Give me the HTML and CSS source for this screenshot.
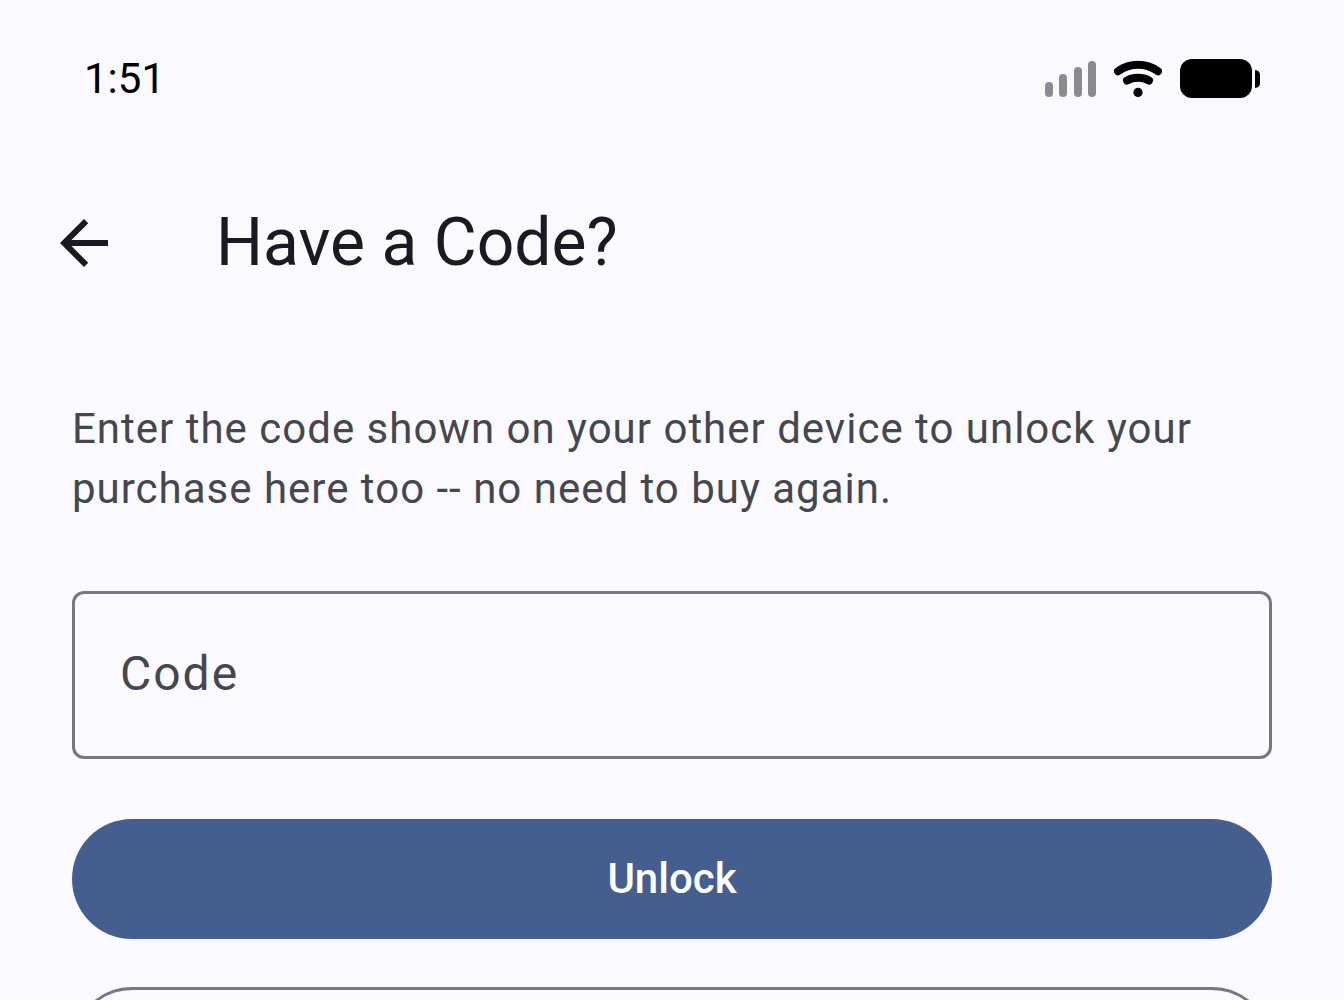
FILE: index.html
```html
<!DOCTYPE html>
<html lang="en">
<head>
<meta charset="utf-8">
<meta name="viewport" content="width=device-width, initial-scale=1">
<title>Have a Code?</title>
<link rel="stylesheet" href="styles.css">
</head>
<body>
<div class="status-bar">
  <time class="clock">1:51</time>
  <div class="indicators">
    <svg class="signal" viewBox="0 0 52 40" aria-hidden="true">
      <rect x="1" y="23" width="8" height="15" rx="4"/>
      <rect x="15" y="15" width="8" height="23" rx="4"/>
      <rect x="30" y="8" width="8" height="30" rx="4"/>
      <rect x="44" y="2" width="8" height="36" rx="4"/>
    </svg>
    <svg class="wifi" viewBox="0 0 48 40" aria-hidden="true">
      <path d="M4 12.200Q13 5.800 24 5.800T44 12.200"/>
      <path d="M13 21.600Q18 18.800 24 18.800T35 21.600"/>
      <circle cx="24" cy="33.400" r="4.600"/>
    </svg>
    <svg class="battery" viewBox="0 0 80 40" aria-hidden="true">
      <rect x="0" y="0" width="72" height="39" rx="12"/>
      <path d="M75 11Q80 11.500 80 16V24Q80 28.500 75 29Z"/>
    </svg>
  </div>
</div>
<header class="app-bar">
  <button class="back" type="button">
    <svg viewBox="0 0 24 24" aria-hidden="true"><path d="M20 11H7.830l5.590-5.590L12 4l-8 8 8 8 1.410-1.410L7.830 13H20z"/></svg>
  </button>
  <h1 class="title">Have a Code?</h1>
</header>
<main class="content">
  <form class="code-form">
    <p class="intro" id="intro">Enter the code shown on your other device to unlock your purchase here too -- no need to buy again.</p>
    <label class="field">
      <input class="code-input" type="text" placeholder="Code" aria-describedby="intro">
    </label>
    <div class="actions">
      <button class="button filled" type="submit">Unlock</button>
      <button class="button outlined" type="button"></button>
    </div>
  </form>
</main>
</body>
</html>
```
FILE: styles.css
```css
* {
  box-sizing: border-box;
}

body {
  display: flex;
  flex-direction: column;
  height: 100vh;
  margin: 0;
  overflow: hidden;
  background: #faf9ff;
  color: #1a1b20;
  font-family: Roboto, "Liberation Sans", sans-serif;
}

.status-bar {
  display: flex;
  flex: none;
  align-items: center;
  justify-content: space-between;
  padding: 49px 84px 38px;
  color: #000;
}

.clock {
  font-size: 42px;
  line-height: 60px;
}

.indicators {
  display: flex;
  gap: 18px;
}

.indicators svg {
  display: block;
  height: 40px;
  fill: #000;
}

.indicators .signal {
  width: 52px;
  fill: #8b8a8f;
}

.wifi {
  width: 48px;
}

.wifi path {
  fill: none;
  stroke: #000;
  stroke-linecap: round;
  stroke-width: 8;
}

.battery {
  width: 80px;
}

.app-bar {
  display: flex;
  flex: none;
  align-items: center;
  gap: 72px;
  min-height: 192px;
  padding: 0 24px;
}

.back {
  padding: 24px;
  border: 0;
  background: none;
}

.back svg {
  display: block;
  width: 72px;
  height: 72px;
  fill: #1a1b20;
}

.title {
  margin: 0;
  font-size: 66px;
  font-weight: 400;
  line-height: 84px;
}

.content {
  flex: 1;
  min-height: 0;
  padding: 60px 72px;
}

.intro {
  margin: 0 0 72px;
  color: #46474d;
  font-size: 42px;
  letter-spacing: 1px;
  line-height: 60px;
}

.field {
  display: block;
}

.code-input {
  display: block;
  width: 100%;
  height: 168px;
  padding: 0 45px 3px;
  border: 3px solid #77777d;
  border-radius: 12px;
  outline: 0;
  background: none;
  color: #1a1b20;
  font: inherit;
  font-size: 48px;
  letter-spacing: 2px;
}

.code-input::placeholder {
  color: #46474d;
  opacity: 1;
}

.actions {
  display: flex;
  flex-direction: column;
  gap: 48px;
  margin-top: 60px;
}

.button {
  width: 100%;
  height: 120px;
  border: 0;
  border-radius: 60px;
  font: inherit;
  font-size: 42px;
  font-weight: 500;
  line-height: 60px;
}

.filled {
  background: #445f8f;
  color: #fff;
}

.outlined {
  border: 3px solid #77777d;
  background: none;
  color: #445f8f;
}
```
